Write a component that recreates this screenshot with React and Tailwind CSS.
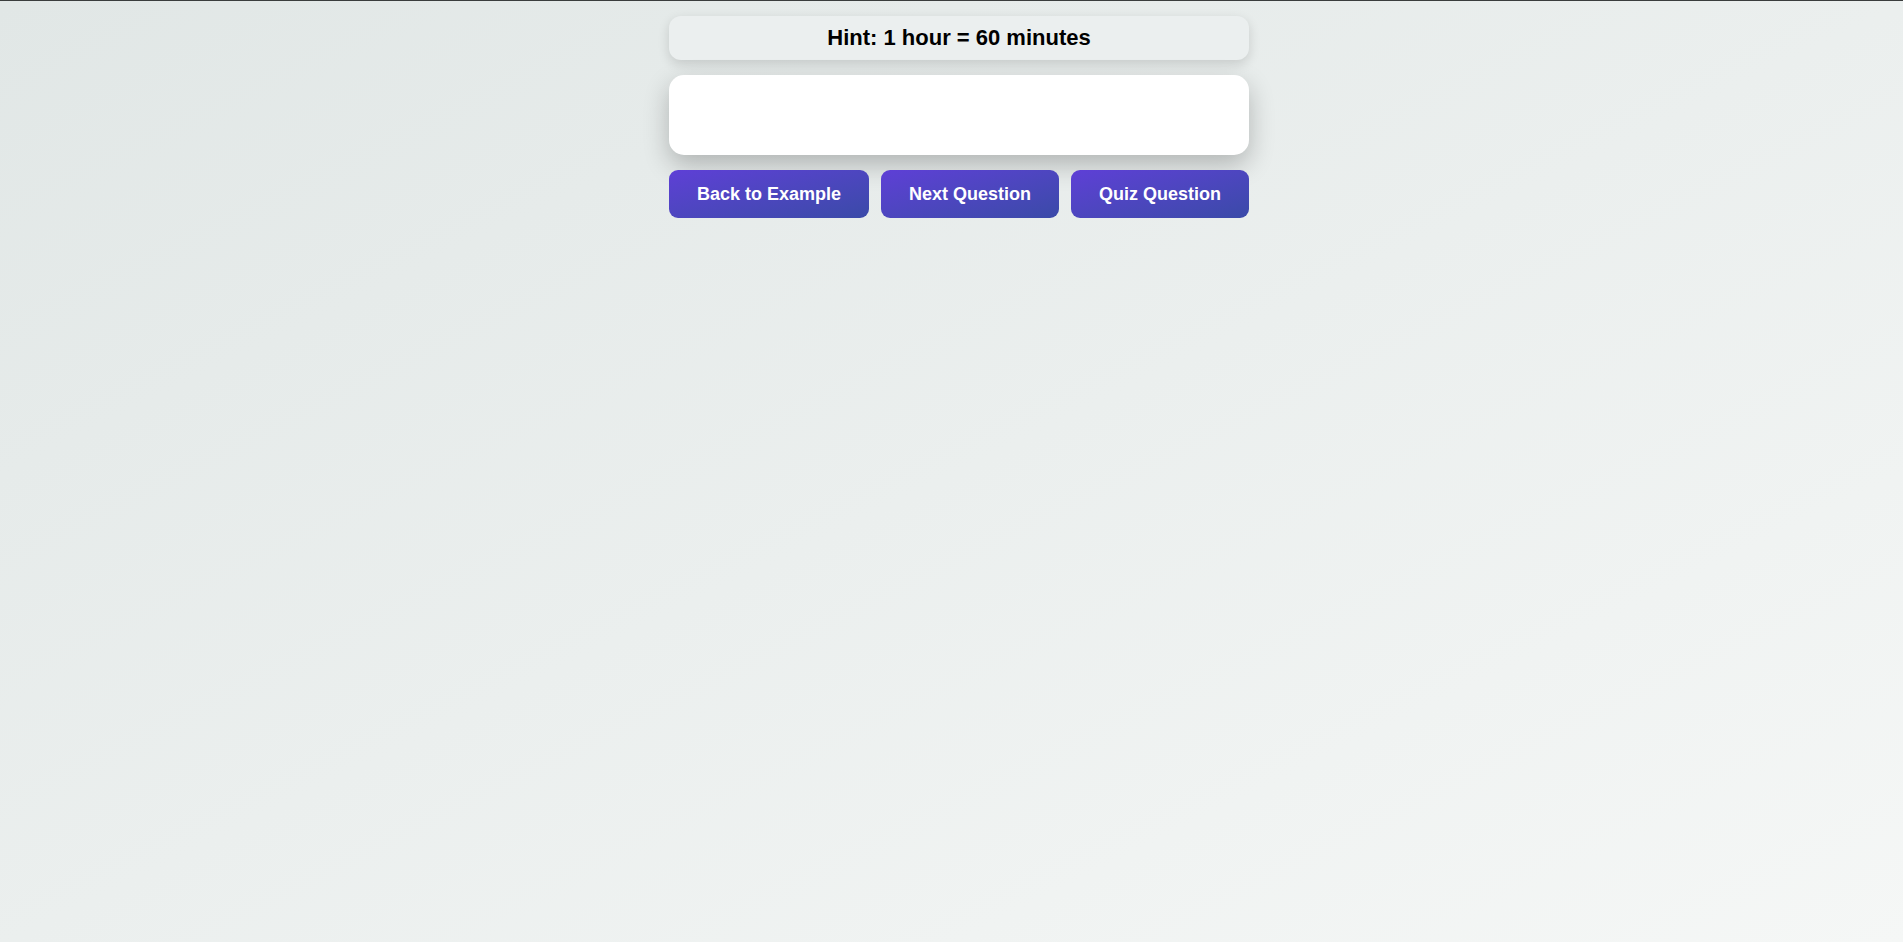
export default function App() {
  const buttons = ['Back to Example', 'Next Question', 'Quiz Question']

  return (
    <div className="flex min-h-screen justify-center border-t border-[#3a3d3d] bg-gradient-to-br from-[#e1e7e6] to-[#f5f7f6] pl-[15px] font-['Liberation_Sans',Arial,sans-serif]">
      <div className="flex w-[580px] flex-col gap-[15px] pt-[15px]">
        {/* Indice */}
        <div className="rounded-[12px] bg-[#ebefef] py-[9px] text-center text-[22px] font-bold leading-[26px] text-black shadow-[0_4px_12px_rgba(0,0,0,0.14)]">
          Hint: 1 hour = 60 minutes
        </div>

        {/* Zone de réponse */}
        <div className="h-[80px] rounded-[15px] bg-white shadow-[0_10px_26px_rgba(0,0,0,0.24)]" />

        {/* Actions */}
        <div className="flex gap-3">
          {buttons.map(label => (
            <button
              key={label}
              className="flex-auto rounded-[9px] bg-gradient-to-br from-[#5e3fd6] to-[#3a4aa8] px-[22px] py-3 text-[18px] font-bold leading-6 text-white"
            >
              {label}
            </button>
          ))}
        </div>
      </div>
    </div>
  )
}
